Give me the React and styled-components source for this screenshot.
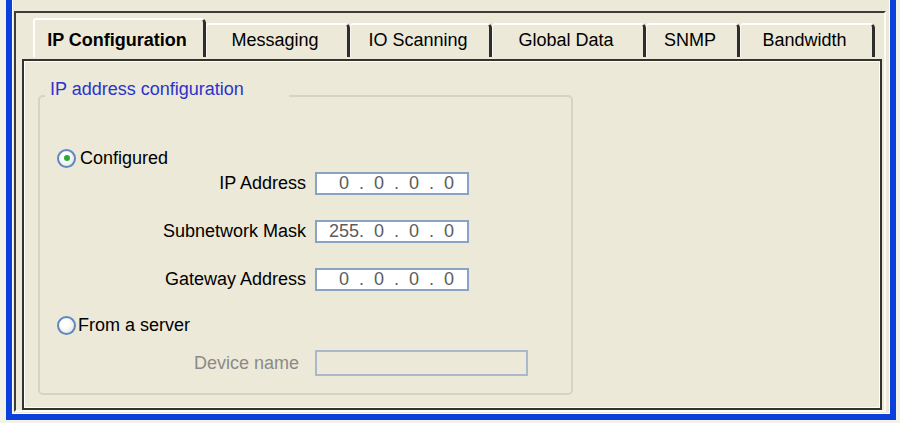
import React from 'react'
import styled, { createGlobalStyle } from 'styled-components'

const GlobalStyle = createGlobalStyle`
  html, body {
    margin: 0;
    padding: 0;
  }
  body {
    background: #f3f2ea;
    font-family: "Liberation Sans", Arial, sans-serif;
  }
`

const Page = styled.div`
  width: 900px;
  height: 423px;
  padding-left: 6px;
  box-sizing: border-box;
`

const Window = styled.div`
  width: 890px;
  height: 420px;
  box-sizing: border-box;
  border: 6px solid #0b40dc;
  border-top: none;
  background: #ece9d8;
  display: flex;
  flex-direction: column;
  padding: 11px 4px 2px 2px;
  box-shadow: inset 1px 0 0 #fdfdfb, inset -1px 0 0 #fdfdfb, inset 0 -1px 0 #fdfdfb;
`

const Frame = styled.div`
  flex: 1;
  display: flex;
  flex-direction: column;
  border-top: 2px solid #3d3d3a;
  border-left: 2px solid #3d3d3a;
  border-right: 2px solid #fbfbf8;
  border-bottom: 2px solid #fbfbf8;
`

const TabStrip = styled.div`
  display: flex;
  align-items: flex-end;
  padding: 5px 0 2px 17px;
`

const Tab = styled.div`
  box-sizing: border-box;
  width: ${p => p.$w}px;
  height: ${p => (p.$active ? 39 : 34)}px;
  display: flex;
  align-items: center;
  justify-content: center;
  padding: ${p => (p.$active ? '3px 4px 0 0' : '0 4px 2px 0')};
  border-top: 2px solid #fff;
  border-left: ${p => (p.$active ? '2px solid #fff' : '1px solid #f8f7f1')};
  border-right: 3px solid #2e2e2b;
  border-radius: 3px 5px 0 0;
  font-size: 18px;
  font-weight: ${p => (p.$active ? 700 : 400)};
  color: #000;
  white-space: nowrap;
`

const Panel = styled.div`
  flex: 1;
  margin: 0 2px 0 6px;
  border: 2px solid #33332f;
  box-shadow: inset 1px 1px 0 #fff, inset -1px -1px 0 #fff;
  padding-left: 14px;
`

const Group = styled.div`
  position: relative;
  width: 535px;
  height: 300px;
  box-sizing: border-box;
  margin-top: 34px;
  border: 2px solid #d6d3c4;
  border-radius: 5px;
  padding-top: 49px;
  display: flex;
  flex-direction: column;
`

const GroupTitle = styled.span`
  position: absolute;
  top: -18px;
  left: 5px;
  padding: 0 45px 0 5px;
  background: #ece9d8;
  line-height: 20px;
  font-size: 18px;
  color: #2b33cc;
`

const Choice = styled.div`
  display: flex;
  align-items: center;
  gap: ${p => p.$gap || 4}px;
  height: 24px;
  padding-left: 17px;
  margin-top: ${p => p.$mt || 0}px;
  font-size: 18px;
  color: #000;
`

const RadioDot = styled.span`
  width: 19px;
  height: 19px;
  box-sizing: border-box;
  border-radius: 50%;
  border: 2px solid #5f88c0;
  background: radial-gradient(circle at 40% 40%, #ffffff 30%, #dddbd0);
  display: flex;
  align-items: center;
  justify-content: center;

  &::after {
    content: '';
    display: ${p => (p.$checked ? 'block' : 'none')};
    width: 6px;
    height: 6px;
    border-radius: 50%;
    background: #2fa83a;
  }
`

const Field = styled.div`
  display: grid;
  grid-template-columns: 266px auto;
  column-gap: 9px;
  align-items: center;
  margin-top: ${p => p.$mt || 0}px;
`

const FieldLabel = styled.span`
  text-align: right;
  font-size: 18px;
  padding-right: ${p => (p.$disabled ? 7 : 0)}px;
  color: ${p => (p.$disabled ? '#8a8a8a' : '#000')};
`

const AddressBox = styled.div`
  box-sizing: border-box;
  width: 154px;
  height: 23px;
  border: 2px solid #8aa3c4;
  background: #fff;
  display: flex;
  align-items: center;
  padding-left: 12px;
  font-size: 18px;
  color: #5c5c5c;
`

const Octet = styled.span`
  width: 30px;
  text-align: center;
`

const Dot = styled.span`
  width: 5px;
  text-align: center;
`

const TextBox = styled.div`
  box-sizing: border-box;
  width: 213px;
  height: 26px;
  border: 2px solid #a9b8cb;
  background: transparent;
`

const tabs = [
  { label: 'IP Configuration', w: 173, active: true },
  { label: 'Messaging', w: 144 },
  { label: 'IO Scanning', w: 142 },
  { label: 'Global Data', w: 154 },
  { label: 'SNMP', w: 94 },
  { label: 'Bandwidth', w: 135 },
]

const Address = ({ value }) => (
  <AddressBox>
    {value.map((o, i) => (
      <React.Fragment key={i}>
        <Octet>{o}</Octet>
        {i < 3 && <Dot>.</Dot>}
      </React.Fragment>
    ))}
  </AddressBox>
)

export default function App() {
  return (
    <Page>
      <GlobalStyle />
      <Window>
        <Frame>
          <TabStrip>
            {tabs.map(t => (
              <Tab key={t.label} $w={t.w} $active={t.active}>{t.label}</Tab>
            ))}
          </TabStrip>
          <Panel>
            <Group>
              <GroupTitle>IP address configuration</GroupTitle>
              <Choice>
                <RadioDot $checked />
                Configured
              </Choice>
              <Field $mt={2}>
                <FieldLabel>IP Address</FieldLabel>
                <Address value={['0', '0', '0', '0']} />
              </Field>
              <Field $mt={25}>
                <FieldLabel>Subnetwork Mask</FieldLabel>
                <Address value={['255', '0', '0', '0']} />
              </Field>
              <Field $mt={25}>
                <FieldLabel>Gateway Address</FieldLabel>
                <Address value={['0', '0', '0', '0']} />
              </Field>
              <Choice $mt={22} $gap={2}>
                <RadioDot />
                From a server
              </Choice>
              <Field $mt={13}>
                <FieldLabel $disabled>Device name</FieldLabel>
                <TextBox />
              </Field>
            </Group>
          </Panel>
        </Frame>
      </Window>
    </Page>
  )
}
